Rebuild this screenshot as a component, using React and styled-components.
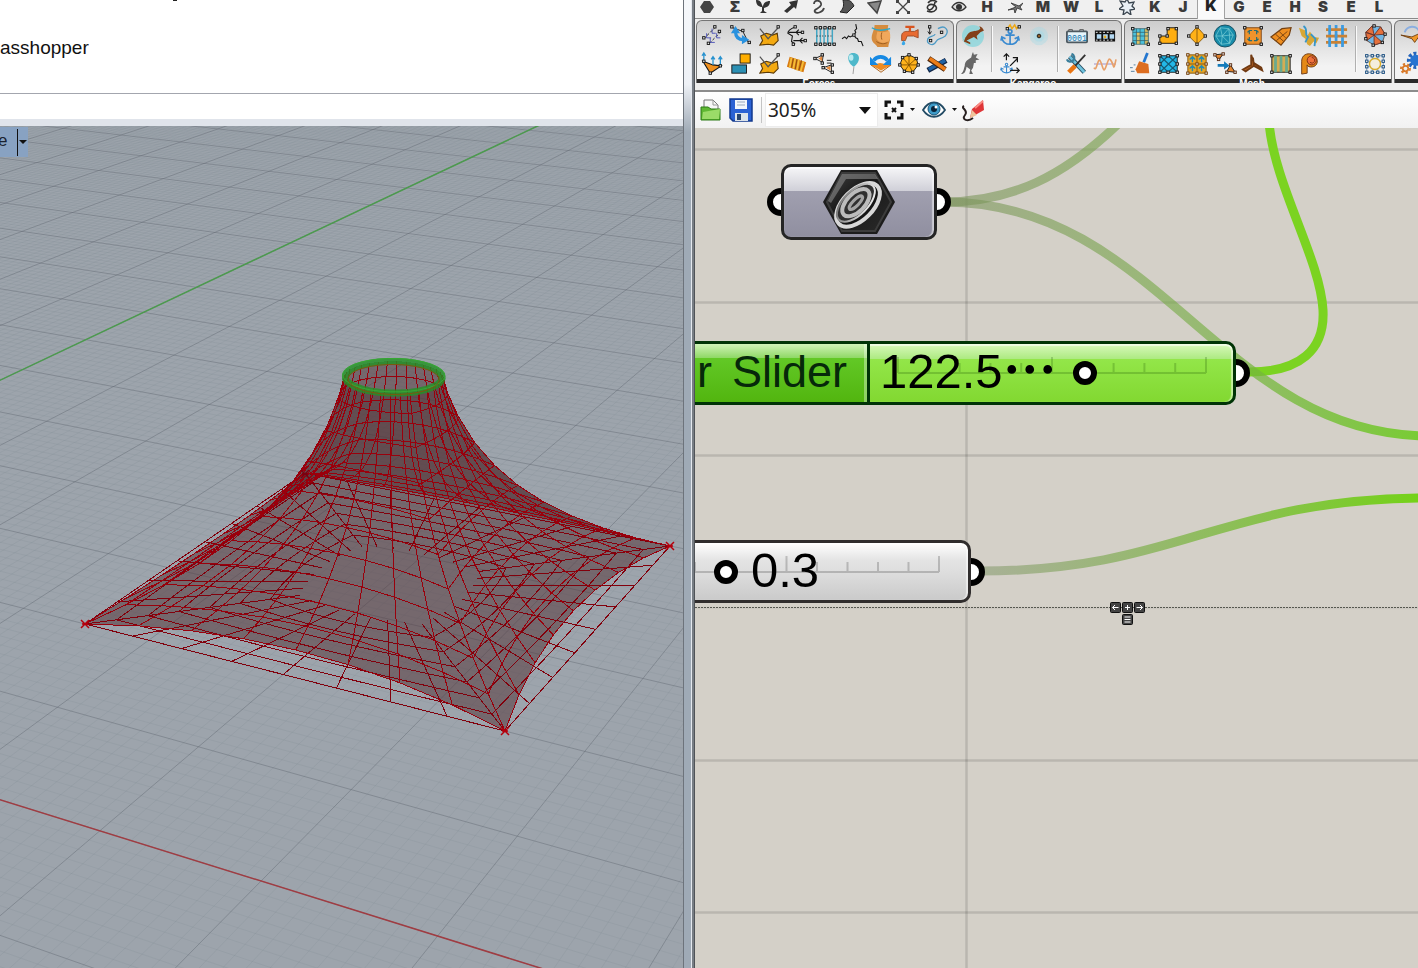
import React from "react";
import styled, { createGlobalStyle } from "styled-components";

const GlobalStyle = createGlobalStyle`
  *, *::before, *::after { box-sizing: border-box; }
  body { margin: 0; background: #d4d0c8; font-family: "Liberation Sans", Arial, sans-serif; }
  button, input, select { font: inherit; color: inherit; margin: 0; padding: 0; border: 0; background: none; }
`;

/* ---------- page frame ---------- */
const Desktop = styled.main`
  display: grid;
  grid-template-columns: minmax(0, 683fr) 12px minmax(0, 723fr);
  min-height: 100vh;
  overflow: hidden;
`;
const RhinoWindow = styled.section`
  display: flex;
  flex-direction: column;
  min-width: 0;
  background: #fff;
`;
const CommandArea = styled.div`
  height: 94px;
  overflow: hidden;
  border-bottom: 1px solid #a3a6ae;
`;
const HistoryLine = styled.div`
  height: 36px;
  padding-left: 173px;
  &::before { content: ""; display: block; width: 4px; height: 1px; background: #222; }
`;
const CommandLine = styled.div`
  font-size: 19px;
  line-height: 24px;
  color: #111;
`;
const PanelGap = styled.div`
  height: 32px;
  background: linear-gradient(#fff 25px, #e0e4eb 25px);
`;
const Viewport = styled.div`
  position: relative;
  flex: 1;
  overflow: hidden;
  background: #9da4ac;
`;
const Scene = styled.svg`
  position: absolute;
  inset: 0;
  width: 100%;
  height: 100%;
`;
const ViewTitle = styled.button`
  position: absolute;
  top: 1px;
  left: 0;
  display: flex;
  align-items: center;
  width: 28px;
  height: 30px;
  background: #88a2c2;
  color: #1a2230;
  font-size: 17px;
  line-height: 24px;
`;
const TitleText = styled.span`
  width: 18px;
  height: 27px;
  border-right: 1px solid #111;
  text-indent: -2px;
  text-align: left;
`;
const Splitter = styled.div`
  border-left: 1px solid #6d737b;
  border-right: 1px solid #4f5358;
  background:
    linear-gradient(90deg, transparent 7px, #e4e8ee 7px 8px, #777d84 8px),
    linear-gradient(#f6f8fb, #eef1f6 84px, #9faab6 132px, #9faab6);
`;
const GrasshopperWindow = styled.section`
  display: flex;
  flex-direction: column;
  min-width: 0;
  overflow: hidden;
  background: #ededed;
`;

/* ---------- tabs ---------- */
const TabStrip = styled.nav`
  display: flex;
  height: 19px;
  margin-left: -2px;
  border-bottom: 1px solid #8a8a8a;
  background: #f0f0f0;
`;
const Tab = styled.button`
  flex: 0 0 28px;
  display: flex;
  justify-content: center;
  align-items: center;
  height: ${(p) => (p.$active ? 19 : 16)}px;
  padding-bottom: ${(p) => (p.$active ? 8 : 2)}px;
  border: solid #a2a2a2;
  border-width: ${(p) => (p.$active ? "0 1px" : "0")};
  background: ${(p) => (p.$active ? "#fafafa" : "transparent")};
  color: ${(p) => (p.$active ? "#222" : "#3a3a3a")};
  font-family: Inter, "Liberation Sans", sans-serif;
  font-size: 15px;
  font-weight: 900;
  line-height: 14px;
`;

/* ---------- ribbon ---------- */
const Ribbon = styled.div`
  display: flex;
  gap: 2px;
  height: 73px;
  padding: 1px 1px 7px;
  border-bottom: 2px solid #8c8c8c;
`;
const Group = styled.section`
  flex: none;
  display: flex;
  flex-direction: column;
  border: 1px solid #757575;
  border-bottom: 0;
  border-radius: 6px 6px 0 0;
  background: linear-gradient(#cdcdcd, #f3f3f3 45px);
  overflow: hidden;
`;
const Sections = styled.div`
  display: flex;
  gap: 10px;
  padding: 1px 2px;
`;
const IconSet = styled.div`
  position: relative;
  display: grid;
  grid-auto-flow: column;
  grid-template-rows: 28px 28px;
  grid-auto-columns: 28px;
  & + &::before {
    content: "";
    position: absolute;
    left: -6px;
    top: 4px;
    bottom: 6px;
    width: 2px;
    border-left: 1px solid #b0b0b0;
    border-right: 1px solid #fafafa;
  }
`;
const IconButton = styled.button`
  display: grid;
  place-items: center;
  svg { display: block; width: 22px; height: 22px; overflow: visible; }
`;
const GroupLabel = styled.div`
  height: 5px;
  padding-right: 12px;
  overflow: hidden;
  background: #2a2a2a;
  color: #fff;
  font-size: 10px;
  font-weight: 700;
  line-height: 10px;
  text-align: center;
`;

/* ---------- toolbar ---------- */
const Toolbar = styled.div`
  display: flex;
  align-items: center;
  height: 36px;
  padding-left: 3px;
  background: linear-gradient(#fff, #f1f1f1);
`;
const ToolButton = styled.button`
  display: grid;
  place-items: center;
  width: ${(p) => p.$w}px;
  height: 32px;
  svg { display: block; overflow: visible; }
`;
const Divider = styled.span`
  width: 1px;
  height: 26px;
  margin: 0 3px;
  background: #c4c4c4;
`;
const ZoomBox = styled.div`
  position: relative;
  width: 113px;
  height: 34px;
  margin-right: 4px;
  border: 1px solid #ececec;
  background: #fff;
  svg { position: absolute; right: 6px; top: 13px; pointer-events: none; }
`;
const ZoomSelect = styled.select`
  width: 100%;
  height: 32px;
  padding-left: 2px;
  appearance: none;
  outline: 0;
  font-family: "Noto Sans", "Open Sans", sans-serif;
  font-size: 19px;
  line-height: 32px;
  color: #222;
`;

/* ---------- canvas ---------- */
const Canvas = styled.div`
  position: relative;
  flex: 1;
  overflow: hidden;
  background: #d4d0c8;
`;
const Node = styled.article`
  position: absolute;
  left: ${(p) => p.$x}px;
  top: ${(p) => p.$y}px;
  width: ${(p) => p.$w}px;
  height: ${(p) => p.$h}px;
`;
const Grip = styled.span`
  position: absolute;
  top: 50%;
  ${(p) => p.$side}: -14px;
  width: 28px;
  height: 28px;
  margin-top: -14px;
  border: 6px solid #000;
  border-radius: 50%;
  background: #fff;
`;
const skins = {
  grey: ["#252525", "linear-gradient(#f6f6f8, #d0d0d8 34%, #a09faf 35%, #908fa0)"],
  light: ["#302d2d", "linear-gradient(#fff, #e4e4e4 30%, #dcdcdc 55%, #cacaca)"],
  green: ["#003306", "linear-gradient(#d8f9bb, #aeea83 25%, #93e649 26%, #82d831)"],
};
const Body = styled.div`
  position: absolute;
  inset: 0;
  display: flex;
  justify-content: ${(p) => (p.$center ? "center" : "flex-start")};
  align-items: center;
  border: 3px solid ${(p) => skins[p.$skin][0]};
  border-radius: 10px;
  background: ${(p) => skins[p.$skin][1]};
  box-shadow: inset -2px 0 1px rgba(255, 255, 255, 0.5), inset 0 2px 1px rgba(255, 255, 255, 0.6);
  overflow: hidden;
`;
const SliderName = styled.label`
  display: flex;
  justify-content: flex-end;
  gap: 20px;
  align-self: stretch;
  width: 192px;
  padding: 2px 20px 0 0;
  border-right: 3px solid #003306;
  background: linear-gradient(#d0f3b8, #8fd866 24%, #62c826 25%, #52b50f);
  box-shadow: inset -3px 0 0 rgba(255, 255, 255, 0.35);
  color: #06280a;
  font-size: 45px;
  line-height: 52px;
  white-space: nowrap;
`;
const Track = styled.svg`
  position: absolute;
  left: ${(p) => p.$left}px;
  top: 8px;
  width: 332px;
  height: 24px;
`;
const Range = styled.input`
  position: absolute;
  left: ${(p) => p.$left}px;
  top: 17px;
  width: ${(p) => p.$w}px;
  height: 24px;
  appearance: none;
  outline: 0;
  &::-webkit-slider-thumb {
    appearance: none;
    width: 24px;
    height: 24px;
    border: 6px solid #000;
    border-radius: 50%;
    background: #fff;
  }
`;
const Value = styled.output`
  position: absolute;
  left: ${(p) => p.$left}px;
  top: 0;
  display: flex;
  align-items: center;
  height: 54px;
  color: #000;
  font-size: 49px;
  line-height: 54px;
`;
const Ellipsis = styled.span`
  padding-bottom: 8px;
  font-family: "Noto Sans CJK JP", sans-serif;
  font-size: 54px;
  font-weight: 700;
  line-height: 54px;
`;
const PanCursor = styled.svg`
  position: absolute;
  left: 415px;
  top: 473px;
`;

/* ---------- 3D scene ---------- */
const project = (s, t, z = 0) => {
  const k = 0.0491 * z;
  const w = 1 - 0.1055 * s + 0.1984 * t - k;
  return [
    (366.7 * s + 280.5 * t + 85 - k * 325) / w,
    (29.9 * s - 57.2 * t + 624 - k * 4774) / w,
  ];
};
const pt = (p) => `${p[0].toFixed(1)} ${p[1].toFixed(1)}`;
const line = (a, b) => `M${pt(a)}L${pt(b)}`;
const ground = (u, v) => project((u + 1.5) / 3, (v - 2) / 3);

let minor = "";
let major = "";
for (let i = -150; i <= 50; i++) {
  const seg = line(ground(i / 10, -3), ground(i / 10, 26));
  if (i % 10 === 0) major += seg;
  else minor += seg;
}
for (let i = -30; i <= 240; i++) {
  const seg = line(ground(-17, i / 10), ground(5, i / 10));
  if (i % 10 === 0) major += seg;
  else minor += seg;
}

const SIDE = 8;
const RINGS = 10;
const BASE_RINGS = 7;
const COUNT = SIDE * 4;
const rim = (i, sag) => {
  const side = Math.floor(i / SIDE) % 4;
  const f = (i % SIDE) / SIDE;
  const d = sag * 4 * f * (1 - f);
  return [[f, d], [1 - d, f], [1 - f, 1 - d], [d, 1 - f]][side];
};
const circle = (i, r) => {
  const a = (i / COUNT) * Math.PI * 2 - Math.PI * 0.75;
  return [0.5 + r * Math.cos(a), 0.5 + r * Math.sin(a)];
};
const mix = (a, b, p) => [a[0] + (b[0] - a[0]) * p, a[1] + (b[1] - a[1]) * p];
const tent = (i, j) => {
  const p = Math.pow(j / RINGS, 1.6);
  const f = (i % SIDE) / SIDE;
  const lift = 0.065 * 4 * f * (1 - f);
  const rise = 1 - Math.log(1 + 8 * p) / Math.log(9);
  return project(...mix(circle(i, 0.108), rim(i, 0.054), p), lift + (1 - lift) * rise);
};
const base = (i, j) => {
  const outer = rim(i, 0);
  const inner = mix(circle(i, 0.19), mix([0.5, 0.5], outer, 0.34), 0.5);
  return project(...mix(inner, outer, j / BASE_RINGS));
};
const wire = (f, rings) => {
  let d = "";
  for (let i = 0; i < COUNT; i++) {
    for (let j = 0; j <= rings; j++) {
      if (j > 0) d += line(f(i, j), f(i + 1, j)) + line(f(i, j - 1), f(i, j));
    }
  }
  return d;
};
const tentLines = wire(tent, RINGS);
const baseLines = wire(base, BASE_RINGS);
const faces = [];
for (let i = 0; i < COUNT; i++) {
  for (let j = 0; j < RINGS; j++) {
    faces.push(`M${pt(tent(i, j))}L${pt(tent(i + 1, j))}L${pt(tent(i + 1, j + 1))}L${pt(tent(i, j + 1))}Z`);
  }
}
const ringPath = (r, z) =>
  Array.from({ length: COUNT }, (_, i) => (i ? "L" : "M") + pt(project(...circle(i, r), z))).join("") + "Z";

function RhinoScene() {
  return (
    <Scene aria-hidden="true">
      <g transform="translate(0 -126)" fill="none">
        <path d={minor} stroke="#6e7983" strokeOpacity=".13" />
        <path d={major} stroke="#5d656e" strokeOpacity=".42" />
        <path d={line(ground(-5, -3), ground(-5, 26))} stroke="#4c9a4e" strokeWidth="1.5" />
        <path d={line(ground(-17, 0), ground(5, 0))} stroke="#a03c42" strokeWidth="1.5" />
        <g fill="#54373a" fillOpacity=".55" shapeRendering="crispEdges">
          {faces.map((d, i) => <path key={i} d={d} />)}
        </g>
        <path d={baseLines} stroke="#82000c" shapeRendering="crispEdges" />
        <path d={tentLines} stroke="#9a000c" shapeRendering="crispEdges" />
        <path d={ringPath(0.106, 1)} stroke="#239126" strokeWidth="7" strokeOpacity=".82" />
        <path d={ringPath(0.112, 1.01)} stroke="#36a832" strokeWidth="1" />
        <path d={ringPath(0.1, 0.99)} stroke="#7c5710" strokeWidth="1" />
        {[[85, 624], [505, 731], [670, 546], [305, 474]].map(([x, y], i) => (
          <path key={i} d={`M${x - 4} ${y - 4}l8 8m0-8l-8 8M${x - 3} ${y}h6`} stroke={i === 3 ? "#7a0010" : "#b4000c"} strokeWidth="1.5" />
        ))}
      </g>
    </Scene>
  );
}

/* ---------- icons ---------- */
const K = "#161616";
const Dots = ({ at, c = K }) => at.map(([x, y], i) => (
  <rect key={i} x={x - 1.3} y={y - 1.3} width="2.600" height="2.600" fill="#ddd" stroke={c} />
));
const Svg = ({ children, w = 24, h = 24 }) => (
  <svg width={w} height={h} viewBox={`0 0 ${w} ${h}`} fill="none" aria-hidden="true">{children}</svg>
);
const Anchor = () => (
  <g stroke="#3a8ad0" strokeWidth="1.800"><circle cx="11" cy="7" r="2" /><path d="M11 9v12M6 11h10M2 14c1 5 5 7 9 7s8-2 9-7M1 17l1-4 4 2M21 17l-1-4-4 2" /></g>
);
const sheet = <><path d="M3 12l6-3 7 2 5-2 1 8-5 5-6-1-9 1 3-5z" fill="#f3a911" stroke="#5b3a08" strokeWidth="1.200" /><path d="M2 4l9 11L22 3" stroke="#555" strokeWidth="1.300" /><Dots at={[[22, 2]]} /></>;

const ICONS = {
  lines: <><path d="M2 15L14 3M8 20L20 8" stroke={K} strokeDasharray="3 2" /><path d="M5 9v5h5M9 14v5h5M11 4v5h4M16 9v5h4" stroke="#4950b8" /><Dots at={[[14, 2], [2, 14], [19, 7], [7, 20]]} /></>,
  swing: <><path d="M3 3l11 4 6 12" stroke={K} /><path d="M6 7c0 6 3 9 9 9" stroke="#2a92df" strokeWidth="3.500" /><path d="M1 9l5-8 5 8zM13 11v10l8-5z" fill="#2a92df" /><Dots at={[[2, 2], [14, 6], [21, 19]]} /></>,
  sheet,
  springs: <><path d="M11 2C5 4 2 7 2 9l5 3-1 6 4 3M3 8h14M8 17h14M14 5l-3 3 3 3M18 14l-3 3 3 3" stroke={K} strokeWidth="1.200" /><Dots at={[[10, 2], [18, 8], [21, 17], [8, 21]]} /></>,
  bars: <><path d="M3 3v18M7 3v18M11 3v18M15 3v18M20 3v18" stroke="#42a6c4" strokeWidth="1.600" /><path d="M2 3h20M2 21h20M3 12h18" stroke={K} strokeDasharray="1 2" /><Dots at={[[2, 3], [7, 3], [12, 3], [17, 3], [22, 3], [2, 21], [7, 21], [12, 21], [17, 21], [22, 21]]} /></>,
  tri: <><path d="M13 11l2-3-1-2 2-2-1-5M13 11l2 3 2 1 1 3 3 0 2 5M13 11l-4 2-2-1-2 3-2-2-3 2" stroke={K} strokeWidth="1.200" /><Dots at={[[13, 11]]} /></>,
  bikini: <><path d="M5 0h15c-2 6 2 8 2 14 0 4-2 7-2 10H8c0-2-5-4-6-8C1 10 5 6 5 0z" fill="#d68c3e" /><path d="M8 7c5 1 9 1 13-1 2 6 1 10-1 12-5 3-14 1-13-6z" fill="#f0a85c" /><path d="M2 3c6 4 13 3 20 1" stroke="#2fa6c5" strokeWidth="1.600" /><path d="M13 8c-1 3-1 5 0 8M7 18c4 3 9 3 12 1" stroke="#9a5a1e" /></>,
  tap: <><path d="M4 17v-5c0-4 3-5 6-5h8l4-2v9l-5-2h-7l-2 5z" fill="#e86b32" stroke="#9b4b26" /><path d="M13 7V2M8 2h10" stroke="#d85420" strokeWidth="2.500" /><path d="M6 17c-3 4-2 5 0 5s3-2 0-5z" fill="#39a8e8" /></>,
  loops: <><path d="M13 4c8-5 13 2 8 8-5 4-8 2-10 6-3 6-11 3-9-3 1-3 7-2 8-5" stroke="#4d9ac5" strokeWidth="1.400" /><path d="M4 3v7M2 7l2 3 2-3" stroke={K} /><Dots at={[[5, 17], [17, 8], [4, 2]]} /></>,
  pull: <><path d="M1 9l11 4 9 1-12 8z" fill="#f1901e" stroke={K} strokeWidth="1.200" /><path d="M2 9V0M12 13V4M20 14V4M0 3l2-3 2 3M10 7l2-3 2 3M18 7l2-3 2 3" stroke="#2892cf" strokeWidth="1.400" /><Dots at={[[2, 9], [9, 22], [20, 14]]} /></>,
  boxes: <><rect x="11" y="1" width="11" height="10" fill="#ffae00" stroke={K} /><rect x="2" y="13" width="16" height="9" fill="#2b8fb3" stroke={K} /></>,
  coil: <><path d="M4 4l18 6-3 11L1 15z" fill="#d87a12" /><path d="M6 5L4 16M10 6L8 17M14 7l-2 12M19 9l-3 11" stroke="#f5be39" strokeWidth="2" /><path d="M8 6L6 16M12 7l-2 11M17 8l-3 11" stroke="#8a4b10" /></>,
  match: <><path d="M1 6l9-4-1 8zM10 16l9 5 0-8zM14 8h5M14 11h5" stroke={K} /><path d="M5 6l4-3v6zM13 16l5-2v5z" fill="#e58a3c" /><Dots at={[[1, 6], [9, 2], [9, 11], [10, 16], [20, 13], [20, 21]]} /></>,
  balloon: <><path d="M13 15l-1 8" stroke="#999" /><path d="M12 0c9 0 8 10 1 15-7-3-9-15-1-15z" fill="#4eb8ca" /><ellipse cx="10" cy="5" rx="2.500" ry="3.500" fill="#b9eaf0" /></>,
  bend: <><path d="M1 13l11 6 11-6-12-2z" fill="#ef8c22" /><path d="M1 13l11 8 11-8" stroke="#a85b10" /><path d="M4 8c4-5 11-5 15 0" stroke="#1689e3" strokeWidth="4" /><path d="M0 4v9h9zM23 4v9h-9z" fill="#1689e3" /></>,
  wheel: <><path d="M12 2l8 4 2 7-6 8-9-1-5-7 3-8z" fill="#ffb31c" stroke={K} /><path d="M12 2v11l8-7M12 13h10M12 13l4 8M12 13l-5 7M12 13H2M12 13L5 5" stroke="#835200" /><Dots at={[[12, 2], [20, 6], [22, 13], [16, 21], [7, 20], [2, 13], [5, 5]]} /></>,
  pipes: <><path d="M2 19L22 8" stroke="#102444" strokeWidth="6" /><path d="M3 18L21 8" stroke="#2062a4" strokeWidth="4" /><path d="M3 6l18 12" stroke="#4d260b" strokeWidth="6" /><path d="M4 6l17 12" stroke="#ec7c17" strokeWidth="4" /></>,
  kangaroo: <><circle cx="12" cy="12" r="12" fill="#7ed4dc" opacity=".7" /><path d="M0 17c5-2 5-9 11-10 3-1 6 0 9-3l-1-3 3 2 2 3-4 2-4 4 1 4-4-3-4 2-4 2 4 2v2l-7-3 2-5c-1 2-3 4-4 4z" fill="#834019" /></>,
  kangaroo2: <path d="M11 1l1-2 1 3 4-1-2 4 4 2-4 1 0 3-2 0-1 5-2 3 2 4h-4l1-5-4-3c-1 5-2 8-6 8 3-3 3-6 4-9 0-5 4-7 7-9z" fill="#676767" />,
  anchor: <><Anchor /><path d="M8 4l3-4 2 4 3-4 2 4 3-3" stroke="#efa813" strokeWidth="1.600" /><Dots at={[[8, 4], [21, 2]]} /></>,
  glow: <><circle cx="12" cy="12" r="10" fill="#9ad9e8" opacity=".35" /><circle cx="12" cy="12" r="6" fill="#9ad9e8" opacity=".4" /><circle cx="12" cy="12" r="2" fill="#8d5d27" stroke={K} /></>,
  anchorMove: <><g transform="translate(0 8) scale(.65)"><Anchor /></g><path d="M7 8V1M4 4l3-3 3 3M11 14l8-8M14 5h5v5M11 19h10M18 16l3 3-3 3" stroke={K} strokeWidth="1.300" /></>,
  counter: <><path d="M3 8V5h4v3M15 8V5h4v3" stroke="#555" /><rect x="1" y="7" width="22" height="12" rx="1" fill="#e5f4fa" stroke="#4d5960" strokeWidth="2" /><text x="12" y="17" fontSize="9" fontFamily="Liberation Mono, monospace" textAnchor="middle" fill="#1673aa">0001</text></>,
  film: <><rect x="1" y="6" width="22" height="12" fill="#111" /><path d="M3 10h5v5H3zM10 10h5v5h-5zM17 10h5v5h-5z" fill="#b3d8f2" /><path d="M2 8h20M2 16.500h20" stroke="#fff" strokeDasharray="2 2" /><circle cx="12" cy="13" r="1.500" fill="#e8ac20" /></>,
  tools: <><path d="M4 4l16 17" stroke="#274f62" strokeWidth="5" /><path d="M4 4l16 17" stroke="#6fc2de" strokeWidth="3" /><path d="M1 7c1 3 5 3 7 1s1-6-2-7" stroke="#397e9b" strokeWidth="2.500" /><path d="M21 2L10 14" stroke="#333" strokeWidth="2" /><path d="M10 14l-7 7" stroke="#e97512" strokeWidth="5" /></>,
  waves: <><path d="M0 12h24" stroke="#9a8ac8" /><path d="M0 16c3 6 4-13 7-7s3 14 6 6 3-11 6-6 2 12 5-2" stroke="#e7a06a" strokeWidth="1.800" /></>,
  grid: <><rect x="3" y="4" width="17" height="17" fill="#4cc2dd" /><path d="M7 8h4v13H7zM16 4h4v17h-4z" fill="#dec265" /><path d="M3 4h17v17H3zM7 4v17M11 4v17M16 4v17M3 8h17M3 12h17M3 17h17" stroke="#315f69" strokeWidth=".8" /><Dots at={[[3, 4], [20, 4], [3, 21], [20, 21]]} /></>,
  ell: <><path d="M2 12h8V3h11v17H2z" fill="#ffae10" stroke={K} /><Dots at={[[2, 12], [10, 12], [11, 4], [20, 4], [2, 20], [20, 20]]} /></>,
  quad: <><path d="M12 2l9 10-9 9-9-9z" fill="#ffb117" stroke="#8a5a10" /><path d="M12 2v19" stroke="#8a5a10" /><Dots at={[[12, 2], [21, 12], [12, 21], [3, 12]]} /></>,
  sphere: <><circle cx="12" cy="12" r="12" fill="#178caa" stroke="#174a5c" /><path d="M7 3l9 1 5 7-4 9-9 1-6-9zM7 3l2 9 8-1-1-7-7 8-7 0M9 12l-1 9M9 12l8 8V11l4 0" stroke="#86d6dd" strokeWidth=".7" /></>,
  scale: <><rect x="3" y="3" width="18" height="18" fill="#f0932c" stroke="#7d4616" /><path d="M8 10v-4M6 8l2-2h3M16 6v4M18 8l-2-2h-3M8 17v-4M6 15l2 2h3M16 17v-4M18 15l-2 2h-3" stroke="#276c75" strokeWidth="1.300" /><Dots at={[[3, 3], [21, 3], [3, 21], [21, 21]]} /></>,
  leaf: <><path d="M1 13L13 4l10-1-2 8-9 11z" fill="#ee8e20" stroke="#744111" strokeWidth="1.300" /><path d="M6 10l9 8M10 7l7 7M7 17l12-10" stroke="#744111" /></>,
  people: <><path d="M1 3l7 3 2 6 3-5 4 6 6 1-3 6-3-2-4 5-3-2-2-6-4-3z" fill="#d8a735" /><path d="M6 1c6 4 0 9 5 12l-3 6M14 10l5 5-1 8" stroke="#3796c8" strokeWidth="2" /></>,
  weave: <><path d="M4 0v24M11 0v24M18 0v24" stroke="#3c9be0" strokeWidth="3" /><path d="M0 5h23M0 12h23M0 19h23" stroke="#c98235" strokeWidth="3" /><path d="M4 3v4M18 3v4M11 10v4M4 17v4M18 17v4" stroke="#3c9be0" strokeWidth="3" /></>,
  patch: <><path d="M9 1l9 1 5 8-3 9-9 3-8-5-1-9z" fill="#71b6e4" stroke="#5c4b46" /><path d="M9 1l2 10-9-3zM18 2l-7 9 12-1zM20 19l-9-8v11zM3 17l8-6-9-3z" fill="#e4703b" stroke="#6b342b" /><Dots at={[[11, 1], [23, 10], [20, 19], [10, 22], [2, 15]]} /></>,
  broom: <><path d="M15 10l4-10" stroke="#2376cf" strokeWidth="3" /><path d="M10 9l10 3 1 10H8l-2-4z" fill="#dc6d20" /><path d="M0 16h3M1 20h4M4 13h2" stroke="#49779a" /></>,
  diag: <><path d="M2 3h19v18H2z" fill="#23b8e8" stroke={K} /><path d="M2 3l19 18M21 3L2 21M11 3L2 12l9 9 10-9z" stroke="#165b74" strokeWidth="1.300" /><Dots at={[[2, 3], [11, 3], [21, 3], [2, 21], [11, 21], [21, 21], [2, 12], [21, 12]]} /></>,
  tiles: <><path d="M2 2h20v20H2z" fill="#eaa623" stroke="#7e5512" /><path d="M12 2v20M2 12h20" stroke="#7e5512" /><path d="M7 10V5M4 7l3-3 3 3M17 10V5M14 7l3-3 3 3M7 20v-5M4 17l3-3 3 3M17 20v-5M14 17l3-3 3 3" stroke="#238bb4" strokeWidth="1.500" /><Dots c="#76420d" at={[[2, 2], [12, 2], [22, 2], [2, 12], [12, 12], [22, 12], [2, 22], [12, 22], [22, 22]]} /></>,
  convert: <><path d="M1 2l9-1-5 7zM14 20l4-7 5 8z" fill="#e3842e" stroke={K} /><path d="M4 12h7V9l6 5-6 4v-3H4z" fill="#147bba" /><Dots c="#5c2d12" at={[[1, 2], [10, 1], [5, 7], [14, 21], [18, 13], [23, 21]]} /></>,
  branch: <path d="M10 2l3 9 8 5 1 3-9-5-9 6-3-2 9-5zM12 5l1 9" stroke="#723b13" strokeWidth="2" fill="#ba6323" />,
  strips: <><path d="M2 3h20v18H2z" fill="#d3ad54" stroke={K} /><path d="M6 3v18M12 3v18M18 3v18" stroke="#69a98e" strokeWidth="3" /><Dots at={[[2, 3], [22, 3], [2, 21], [22, 21]]} /></>,
  roll: <><path d="M4 23V9c0-12 18-10 17 1-1 7-11 6-11 3v9z" fill="#e58a17" stroke="#6a3815" /><circle cx="15" cy="8" r="5" fill="#ef713d" stroke="#783014" /><path d="M15 5a3 3 0 1 1-2 5" stroke="#792f14" /></>,
  lattice: <><path d="M3 3h18v18H3zM9 3v18M15 3v18M3 9h18M3 15h18" stroke="#547b9f" strokeWidth=".8" /><circle cx="12" cy="12" r="6" fill="#f4eedd" stroke="#d9ac2a" strokeWidth="1.500" /><Dots c="#1e5283" at={[[3, 3], [9, 3], [15, 3], [21, 3], [3, 9], [21, 9], [3, 15], [21, 15], [3, 21], [9, 21], [15, 21], [21, 21]]} /></>,
  fold: <><path d="M5 8c3-8 13-8 16-1" stroke="#8baee0" strokeWidth="2" /><path d="M1 11l12 2 11-5-8 11-3-4z" fill="#f09829" stroke="#704014" /></>,
  gears: <><circle cx="17" cy="8" r="7" stroke="#2465bd" strokeWidth="5" strokeDasharray="3 2" /><circle cx="17" cy="8" r="6" fill="#2874d0" /><circle cx="6" cy="17" r="4" fill="#d97b2b" stroke="#d97b2b" strokeWidth="4" strokeDasharray="2 2" /><circle cx="6" cy="17" r="2" fill="#eee" /></>,
};

const GROUPS = [
  ["Forces", [["lines", "pull", "swing", "boxes", "sheet", "sheet", "springs", "coil", "bars", "match", "tri", "balloon", "bikini", "bend", "tap", "wheel", "loops", "pipes"]]],
  ["Kangaroo", [["kangaroo", "kangaroo2"], ["anchor", "anchorMove", "glow", null], ["counter", "tools", "film", "waves"]]],
  ["Mesh", [["grid", "broom", "ell", "diag", "quad", "tiles", "sphere", "convert", "scale", "branch", "leaf", "strips", "people", "roll", "weave", null], ["patch", "lattice"]]],
  ["", [["fold", "gears"]]],
];

const TAB_ICONS = {
  params: <path d="M5 2h6l4 6-4 6H5L1 8z" fill="#444" />,
  sets: <path d="M1 1c3 0 5 1 6 5l1 2c0-4 3-6 7-6 0 4-2 6-6 7v3l3 2H5l2-2V8C4 8 1 6 1 1z" fill="#333" />,
  vector: <path d="M1 12l7-6-2-3 9-2-2 9-2-2-7 6z" fill="#333" />,
  curve: <path d="M3 5c0-5 8-4 7 1-1 4-8 4-6 7 2 2 8 0 9-4" stroke="#444" strokeWidth="1.800" />,
  surface: <path d="M4 1c5-1 9 1 11 6l-7 7-7-1c4-4 4-7 3-12z" fill="#555" stroke="#222" />,
  mesh: <path d="M1 4l13-2-4 12zM1 4l9 10" stroke="#444" strokeWidth="1.500" fill="#888" />,
  intersect: <><path d="M2 2l12 12M14 2L2 14" stroke="#444" strokeWidth="1.300" /><path d="M1 1h3v3H1zM12 1h3v3h-3zM1 12h3v3H1zM12 12h3v3h-3z" fill="#444" /></>,
  transform: <path d="M4 12c9 3 12-4 7-6S3 8 5 10s6 0 7-7M5 4c3-4 6-3 9-1" stroke="#333" strokeWidth="1.600" />,
  display: <><path d="M1 8c4-6 10-6 14 0-4 5-10 5-14 0z" fill="#ddd" stroke="#333" strokeWidth="1.300" /><circle cx="8" cy="8" r="3" fill="#333" /></>,
  insect: <path d="M1 11l8-3-5-4 8 3 4-3-3 4 2 3-5-2-2 5-1-4z" stroke="#444" fill="#777" />,
  star: <path d="M8 0l2 4 5-1-2 4 3 3-5 1 1 5-4-3-4 3 1-5-5-1 4-3-3-5 5 1z" stroke="#39444e" strokeWidth="1.300" fill="#e8eff5" />,
};
const TABS = ["params", "Σ", "sets", "vector", "curve", "surface", "mesh", "intersect", "transform", "display", "H", "insect", "M", "W", "L", "star", "K", "J", "K", "G", "E", "H", "S", "E", "L"];

const Caret = () => <svg width="5" height="4" viewBox="0 0 5 4" aria-hidden="true"><path d="M0 0h5L2.500 3z" fill="#111" /></svg>;

function Rail({ left, count, step, dark }) {
  return (
    <Track $left={left} aria-hidden="true">
      <path
        d={`M12 21H${12 + step * count}` + Array.from({ length: count + 1 }, (_, i) => `M${12 + step * i} 21V${i % 5 ? 11 : 5}`).join("")}
        stroke={dark} strokeWidth="2" strokeOpacity=".22" fill="none"
      />
    </Track>
  );
}

function Wires() {
  const rows = [149.5, 302.5, 455.5, 608, 760.5, 912.5];
  return (
    <Scene aria-hidden="true">
      <defs>
        <linearGradient id="fade" gradientUnits="userSpaceOnUse" x1="945" y1="0" x2="1418" y2="0">
          <stop offset="0" stopColor="#7b925c" stopOpacity=".58" />
          <stop offset=".5" stopColor="#78ac48" stopOpacity=".64" />
          <stop offset="1" stopColor="#6fcb24" stopOpacity=".9" />
        </linearGradient>
        <linearGradient id="fadeLow" gradientUnits="userSpaceOnUse" x1="980" y1="0" x2="1418" y2="0">
          <stop offset="0" stopColor="#8b9c75" stopOpacity=".6" />
          <stop offset="1" stopColor="#74d218" />
        </linearGradient>
      </defs>
      <g transform="translate(-695 -128)" fill="none">
        {rows.map((y) => <path key={y} d={`M695 ${y}H3000`} stroke="#000" strokeOpacity={y === 608 ? 0.04 : 0.12} strokeWidth="2.500" />)}
        <path d="M966.500 128V2000" stroke="#000" strokeOpacity=".12" strokeWidth="2.500" />
        <path d="M695 607.500H3000" stroke="#55574f" strokeDasharray="2 1" />
        <path d="M1249 372C1300 372 1325 350 1323 310C1320 258 1274 185 1269 122" stroke="#7bd321" strokeWidth="9" />
        <path d="M944 202C1012 202 1064 176 1118 124" stroke="url(#fade)" strokeWidth="9" />
        <path d="M944 202C1160 202 1220 436 1430 436" stroke="url(#fade)" strokeWidth="9" />
        <path d="M980 571C1180 571 1220 498 1430 498" stroke="url(#fadeLow)" strokeWidth="9" />
      </g>
    </Scene>
  );
}

const HexIcon = () => (
  <svg width="74" height="66" viewBox="0 0 74 66" aria-hidden="true">
    <defs>
      <linearGradient id="hex" x1="0" y1="0" x2="1" y2="1"><stop offset="0" stopColor="#444" /><stop offset=".4" stopColor="#181818" /><stop offset="1" stopColor="#2a2a2a" /></linearGradient>
      <linearGradient id="disc" x1="0" y1="0" x2="1" y2="1"><stop offset="0" stopColor="#666" /><stop offset="1" stopColor="#fff" /></linearGradient>
    </defs>
    <path d="M19 1h36l18 32-18 32H19L1 33z" fill="#1c1c1c" />
    <path d="M20 4h33l16 29-16 29H20L5 33z" fill="url(#hex)" stroke="#3c3c3c" strokeWidth="2" />
    <path d="M20 5h33l3 5H24L9 34l-3-2z" fill="#8a8a8a" opacity=".6" />
    <g fill="none" transform="rotate(-45 36 33)">
      <ellipse cx="34" cy="35" rx="27" ry="15" fill="#161616" stroke="#d8d8d8" strokeWidth="4" />
      <ellipse cx="34" cy="32" rx="24" ry="12" fill="#303030" stroke="url(#disc)" strokeWidth="2" />
      <ellipse cx="34" cy="32" rx="17" ry="9" stroke="#bcbcbc" strokeWidth="4" />
      <ellipse cx="34" cy="32" rx="9" ry="3" stroke="#a4a4a4" strokeWidth="3" />
    </g>
  </svg>
);

export default function App() {
  return (
    <>
      <GlobalStyle />
      <Desktop>
        <RhinoWindow>
          <CommandArea>
            <HistoryLine />
            <CommandLine>asshopper</CommandLine>
          </CommandArea>
          <PanelGap />
          <Viewport>
            <RhinoScene />
            <ViewTitle type="button" aria-label="Viewport menu">
              <TitleText>e</TitleText>
              <svg width="9" height="5" viewBox="0 0 9 5" aria-hidden="true"><path d="M1 0h8L5 4z" fill="#111" /></svg>
            </ViewTitle>
          </Viewport>
        </RhinoWindow>
        <Splitter />
        <GrasshopperWindow>
          <TabStrip aria-label="Component tabs">
            {TABS.map((t, i) => (
              <Tab key={i} type="button" $active={i === 18} aria-label={t}>
                {TAB_ICONS[t] ? <svg width="16" height="16" viewBox="0 0 16 16" fill="none" aria-hidden="true">{TAB_ICONS[t]}</svg> : t}
              </Tab>
            ))}
          </TabStrip>
          <Ribbon>
            {GROUPS.map(([name, sets], g) => (
              <Group key={g}>
                <Sections>
                  {sets.map((set, s) => (
                    <IconSet key={s}>
                      {set.map((id, i) => id
                        ? <IconButton key={i} type="button" aria-label={id}><Svg>{ICONS[id]}</Svg></IconButton>
                        : <span key={i} />)}
                    </IconSet>
                  ))}
                </Sections>
                <GroupLabel>{name}</GroupLabel>
              </Group>
            ))}
          </Ribbon>
          <Toolbar>
            <ToolButton type="button" $w={26} aria-label="Open">
              <Svg><path d="M5 2h9l5 5v9H5z" fill="#f7f7f7" stroke="#777" /><path d="M14 2v5h5" stroke="#999" /><path d="M2 9h7l3 2h9v11H2z" fill="#5fb733" stroke="#2d7a16" /><path d="M4 14l17-3-1 10H3z" fill="#9bdb68" /></Svg>
            </ToolButton>
            <ToolButton type="button" $w={34} aria-label="Save">
              <Svg><path d="M1 1h22v22H4l-3-3z" fill="#2b62d4" stroke="#12398d" strokeWidth="1.500" /><path d="M6 2h12v9H6z" fill="#f3f7fb" /><path d="M8 4h8M8 7h8" stroke="#9ba9bd" /><path d="M6 15h13v8H6z" fill="#dce3ea" /><path d="M8 16h4v6H8z" fill="#294570" /></Svg>
            </ToolButton>
            <Divider />
            <ZoomBox>
              <ZoomSelect aria-label="Zoom" defaultValue="305%"><option>305%</option></ZoomSelect>
              <svg width="12" height="7" viewBox="0 0 12 7" aria-hidden="true"><path d="M0 0h12L6 7z" fill="#111" /></svg>
            </ZoomBox>
            <ToolButton type="button" $w={24} aria-label="Zoom extents">
              <Svg><path d="M4 9V4h5M15 4h5v5M20 15v5h-5M9 20H4v-5" stroke="#111" strokeWidth="3" /><path d="M10 10l4 4M14 10l-4 4" stroke="#111" strokeWidth="2" /></Svg>
            </ToolButton>
            <ToolButton type="button" $w={12} aria-label="Extents menu"><Caret /></ToolButton>
            <ToolButton type="button" $w={32} aria-label="Preview">
              <Svg><path d="M1 12c6-10 16-10 22 0-6 9-16 9-22 0z" fill="#fff" stroke="#234b64" strokeWidth="1.800" /><circle cx="12" cy="11" r="6" fill="#3e9bc8" stroke="#185478" /><circle cx="12" cy="11" r="3" fill="#092238" /><circle cx="14" cy="9" r="1.500" fill="#fff" /></Svg>
            </ToolButton>
            <ToolButton type="button" $w={8} aria-label="Preview menu"><Caret /></ToolButton>
            <ToolButton type="button" $w={30} aria-label="Sketch">
              <Svg><path d="M3 8c-4 2 5 4 1 9s3 7 8 3" stroke="#282020" strokeWidth="2" /><path d="M9 20l2-9 11-9 1 10z" fill="#df3638" /><path d="M9 20l2-8 5 5z" fill="#efc49b" /><path d="M14 10L22 3" stroke="#fa8b83" strokeWidth="2" /></Svg>
            </ToolButton>
          </Toolbar>
          <Canvas>
            <Wires />
            <Node $x={86} $y={36} $w={156} $h={76}>
              <Grip $side="left" /><Grip $side="right" />
              <Body $skin="grey" $center><HexIcon /></Body>
            </Node>
            <Node $x={-20} $y={213} $w={561} $h={64}>
              <Grip $side="right" />
              <Body $skin="green">
                <SliderName htmlFor="number"><span>r</span><span>Slider</span></SliderName>
                <Rail left={208} count={10} step={30.8} dark="#174d00" />
                <Value $left={202} htmlFor="number">122.5<Ellipsis lang="ja">…</Ellipsis></Value>
                <Range id="number" $left={208} $w={332} type="range" min="0" max="1000" defaultValue="607" />
              </Body>
            </Node>
            <Node $x={-103} $y={412} $w={379} $h={63}>
              <Grip $side="right" />
              <Body $skin="light">
                <Rail left={27} count={10} step={30.5} dark="#222" />
                <Value $left={156} htmlFor="factor">0.3</Value>
                <Range id="factor" $left={27} $w={329} type="range" min="0" max="10" defaultValue="3" aria-label="Factor" />
              </Body>
            </Node>
            <PanCursor width="36" height="26" viewBox="0 0 36 26" fill="none" aria-hidden="true">
              {[[0, 1], [12, 1], [24, 1], [12, 13]].map(([x, y]) => <rect key={x + "-" + y} x={x + 0.5} y={y + 0.5} width="10" height="10" rx="1" fill="#444" stroke="#111" />)}
              <path d="M2.500 6.500h6M5 4L2.500 6.500 5 9M15 6.500h5M17.500 4v5M26.500 6.500h6M30 4l2.500 2.500L30 9M14.500 16h6M14.500 18.500h6M14.500 21h6" stroke="#fff" />
            </PanCursor>
          </Canvas>
        </GrasshopperWindow>
      </Desktop>
    </>
  );
}
